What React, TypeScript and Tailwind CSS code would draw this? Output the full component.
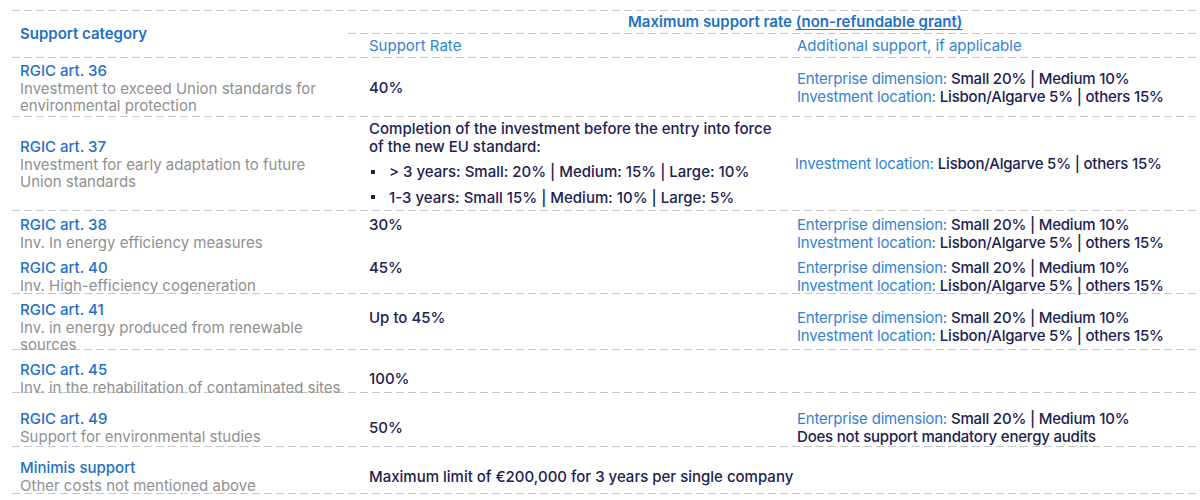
const Dash = ({ className = "" }: { className?: string }) => (
  <div
    className={`h-px bg-[linear-gradient(to_right,#c6c6c6_8px,transparent_8px)] bg-[length:12px_1px] bg-repeat-x ${className}`}
  />
);

const Cat = ({ title, desc }: { title: string; desc: string[] }) => (
  <>
    <div className="font-medium text-[#1f6fc5]">{title}</div>
    {desc.map((d) => (
      <div key={d} className="text-[#8f8f8f] whitespace-nowrap">
        {d}
      </div>
    ))}
  </>
);

const Extra = ({ label, value }: { label: string; value: string }) => (
  <div className="whitespace-nowrap tracking-[-0.2px]">
    <span className="text-[#3582d4]">{label}</span>{" "}
    <span className="font-medium text-[#1b2152]">{value}</span>
  </div>
);

const Enterprise = () => <Extra label="Enterprise dimension:" value="Small 20% | Medium 10%" />;
const Location = () => <Extra label="Investment location:" value="Lisbon/Algarve 5% | others 15%" />;

type RowProps = {
  h: string;
  p1: string;
  p2: string;
  p3: string;
  c1: React.ReactNode;
  c2?: React.ReactNode;
  c3?: React.ReactNode;
};

const Row = ({ h, p1, p2, p3, c1, c2, c3 }: RowProps) => (
  <div className={`flex ${h}`}>
    <div className={`w-[336px] shrink-0 pl-[8px] ${p1}`}>{c1}</div>
    <div className={`w-[432px] shrink-0 pl-[21px] font-medium text-[#1b2152] whitespace-nowrap ${p2}`}>{c2}</div>
    <div className={`flex-1 pl-[17px] ${p3}`}>{c3}</div>
  </div>
);

export default function App() {
  return (
    <div className="w-[1200px] h-[500px] overflow-hidden bg-white pt-[10px] pl-[12px] font-['Inter',sans-serif] text-[15px] leading-[17.5px]">
      <Dash />
      {/* header */}
      <div className="flex h-[46px]">
        <div className="w-[336px] shrink-0 pl-[8px] flex items-center font-semibold text-[#1f6fc5]">
          Support category
        </div>
        <div className="flex-1 flex flex-col">
          <div className="h-[22px] flex items-center pl-[280px] font-semibold text-[#1f6fc5] whitespace-nowrap">
            Maximum support rate&nbsp;<span className="underline underline-offset-2">(non-refundable grant)</span>
          </div>
          <Dash />
          <div className="h-[23px] flex items-center text-[#3582d4]">
            <div className="w-[432px] pl-[21px]">Support Rate</div>
            <div className="pl-[17px]">Additional support, if applicable</div>
          </div>
        </div>
      </div>
      <Dash />

      <Row
        h="h-[58px]"
        p1="pt-[4px]"
        p2="pt-[21px]"
        p3="pt-[12px]"
        c1={<Cat title="RGIC art. 36" desc={["Investment to exceed Union standards for", "environmental protection"]} />}
        c2="40%"
        c3={
          <>
            <Enterprise />
            <Location />
          </>
        }
      />
      <Dash />

      <Row
        h="h-[93px]"
        p1="pt-[21px]"
        p2="pt-[3px]"
        p3="pt-[38px]"
        c1={<Cat title="RGIC art. 37" desc={["Investment for early adaptation to future", "Union standards"]} />}
        c2={
          <>
            <div>Completion of the investment before the entry into force</div>
            <div>of the new EU standard:</div>
            <div className="mt-[8px] flex items-center">
              <span className="w-[4px] h-[4px] bg-[#1b2152] ml-[2px] mr-[14px]" />
              &gt; 3 years: Small: 20% | Medium: 15% | Large: 10%
            </div>
            <div className="mt-[8px] flex items-center">
              <span className="w-[4px] h-[4px] bg-[#1b2152] ml-[2px] mr-[14px]" />
              1-3 years: Small 15% | Medium: 10% | Large: 5%
            </div>
          </>
        }
        c3={
          <div className="-ml-[2px]">
            <Location />
          </div>
        }
      />
      <Dash />

      <Row
        h="h-[41px]"
        p1="pt-[5px]"
        p2="pt-[5px]"
        p3="pt-[5px]"
        c1={<Cat title="RGIC art. 38" desc={["Inv. In energy efficiency measures"]} />}
        c2="30%"
        c3={
          <>
            <Enterprise />
            <Location />
          </>
        }
      />
      <Row
        h="h-[41px]"
        p1="pt-[7px]"
        p2="pt-[7px]"
        p3="pt-[7px]"
        c1={<Cat title="RGIC art. 40" desc={["Inv. High-efficiency cogeneration"]} />}
        c2="45%"
        c3={
          <>
            <Enterprise />
            <Location />
          </>
        }
      />
      <Dash />

      <Row
        h="h-[55px]"
        p1="pt-[7px]"
        p2="pt-[15px]"
        p3="pt-[15px]"
        c1={<Cat title="RGIC art. 41" desc={["Inv. in energy produced from renewable", "sources"]} />}
        c2="Up to 45%"
        c3={
          <>
            <Enterprise />
            <Location />
          </>
        }
      />
      <Dash />

      <Row
        h="h-[42px]"
        p1="pt-[11px]"
        p2="pt-[20px]"
        p3=""
        c1={<Cat title="RGIC art. 45" desc={["Inv. in the rehabilitation of contaminated sites"]} />}
        c2="100%"
      />
      <Dash />

      <Row
        h="h-[53px]"
        p1="pt-[17px]"
        p2="pt-[26px]"
        p3="pt-[17px]"
        c1={<Cat title="RGIC art. 49" desc={["Support for environmental studies"]} />}
        c2="50%"
        c3={
          <>
            <Enterprise />
            <div className="font-medium text-[#1b2152] tracking-[-0.2px]">Does not support mandatory energy audits</div>
          </>
        }
      />
      <Dash />

      <Row
        h="h-[46px]"
        p1="pt-[12px]"
        p2="pt-[21px]"
        p3=""
        c1={<Cat title="Minimis support" desc={["Other costs not mentioned above"]} />}
        c2="Maximum limit of €200,000 for 3 years per single company"
      />
      <Dash />
    </div>
  );
}
